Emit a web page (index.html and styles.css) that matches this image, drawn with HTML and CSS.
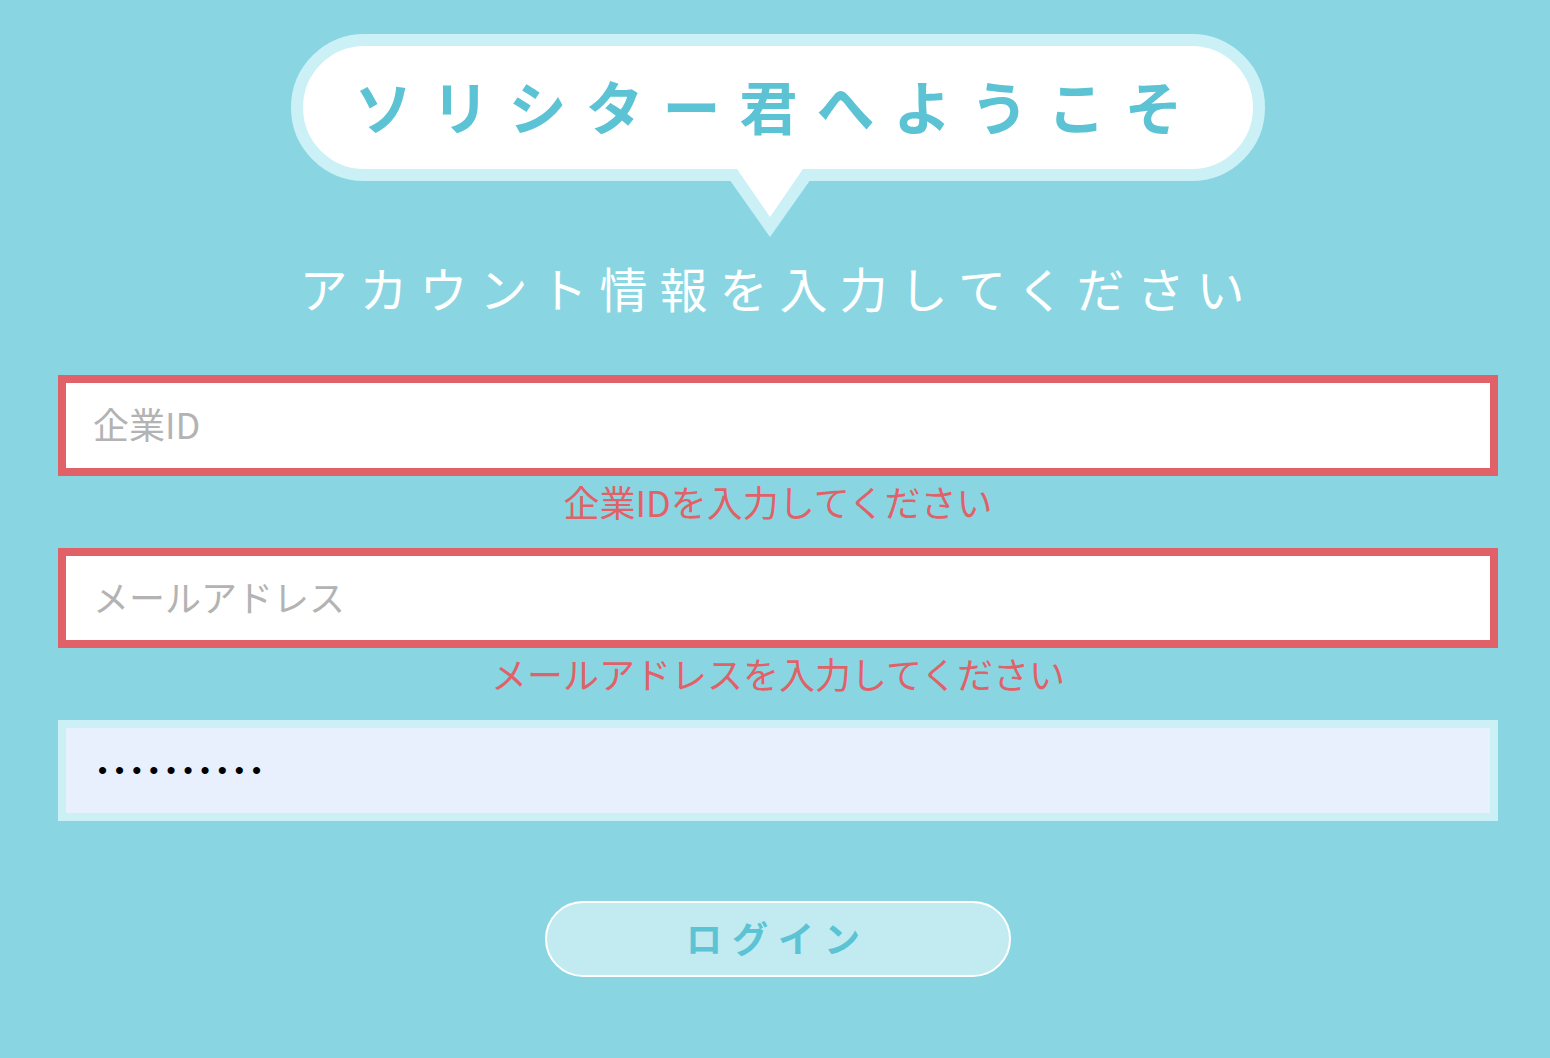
FILE: index.html
```html
<!DOCTYPE html>
<html lang="ja">
<head>
<meta charset="utf-8">
<title>ソリシター君</title>
<link rel="stylesheet" href="styles.css">
</head>
<body>
<main class="page">
  <div class="bubble">
    <h1 class="bubble-title">ソリシター君へようこそ</h1>
    <svg class="bubble-tail" width="96" height="70" viewBox="0 0 96 70">
      <polygon points="0,0 96,0 48,68" fill="#cbf1f6"/>
      <polygon points="15,0 81,0 48,48" fill="#ffffff"/>
    </svg>
  </div>
  <p class="subtitle">アカウント情報を入力してください</p>
  <form class="login-form">
    <input class="field field-error" type="text" placeholder="企業ID">
    <p class="error-msg">企業IDを入力してください</p>
    <input class="field field-error" type="email" placeholder="メールアドレス">
    <p class="error-msg">メールアドレスを入力してください</p>
    <input class="field field-password" type="password" value="..........">
    <div class="actions">
      <button class="login-btn" type="button">ログイン</button>
    </div>
  </form>
</main>
</body>
</html>
```

FILE: styles.css
```css
html, body {
  margin: 0;
  padding: 0;
  background: #89d6e2;
}

body {
  font-family: "Noto Sans CJK JP", "Noto Sans", sans-serif;
  height: 1058px;
  overflow: hidden;
}

.page {
  padding: 34px 52px 0 58px;
  display: flex;
  flex-direction: column;
  align-items: center;
}

.bubble {
  position: relative;
  box-sizing: border-box;
  width: 974px;
  height: 147px;
  border: 12px solid #cbf1f6;
  border-radius: 80px;
  background: #ffffff;
  display: flex;
  align-items: center;
  justify-content: center;
}

.bubble-title {
  margin: 0 0 6px;
  font-size: 58px;
  line-height: 1;
  font-weight: 700;
  letter-spacing: 19px;
  color: #5bc3d3;
  white-space: nowrap;
}

.bubble-tail {
  position: absolute;
  left: 419px;
  top: 123px;
  display: block;
}

.subtitle {
  margin: 82px 0 0;
  font-size: 48px;
  line-height: 1;
  font-weight: 400;
  letter-spacing: 12px;
  color: #ffffff;
  white-space: nowrap;
}

.login-form {
  margin-top: 64px;
  width: 1440px;
  display: flex;
  flex-direction: column;
}

.field {
  box-sizing: border-box;
  display: block;
  width: 100%;
  height: 101px;
  margin: 0;
  padding: 0 27px 5px;
  border: 8px solid #cbf1f6;
  border-radius: 0;
  background: #ffffff;
  font-family: "Noto Sans CJK JP", "Noto Sans", sans-serif;
  font-size: 36px;
  color: #333333;
  outline: none;
}

.field::placeholder {
  color: #b3b3b3;
  opacity: 1;
}

.field-error {
  border-color: #e06268;
}

.field-error + .error-msg + .field-error {
  height: 100px;
}

.field-password {
  background: #e8f0fe;
  font-family: "Liberation Sans", sans-serif;
  font-size: 26px;
  letter-spacing: 8px;
  padding: 0 0 0 32px;
  color: #000000;
}

.error-msg {
  box-sizing: border-box;
  height: 72px;
  margin: 0;
  padding-top: 8px;
  font-size: 36px;
  line-height: 35px;
  color: #e06268;
  text-align: center;
  white-space: nowrap;
}

.actions {
  margin-top: 80px;
  display: flex;
  justify-content: center;
}

.login-btn {
  box-sizing: border-box;
  width: 466px;
  height: 76px;
  border: 2px solid #ffffff;
  border-radius: 38px;
  background: #c1ebf1;
  font-family: "Noto Sans CJK JP", "Noto Sans", sans-serif;
  font-size: 36px;
  line-height: 1;
  font-weight: 700;
  letter-spacing: 10px;
  color: #5bc3d3;
  padding: 0 0 4px;
  display: flex;
  align-items: center;
  justify-content: center;
}
```
